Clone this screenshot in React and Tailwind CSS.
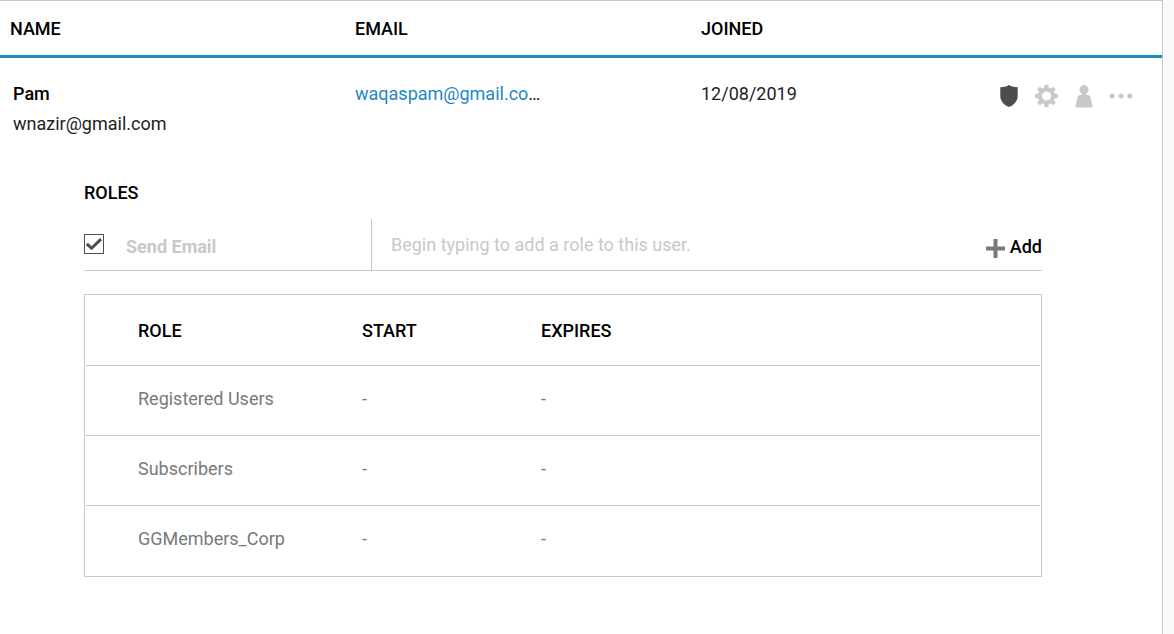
import React, { useState } from "react";

const roles = ["Registered Users", "Subscribers", "GGMembers_Corp"];

function ShieldIcon() {
  return (
    <svg width="18" height="22" viewBox="0 0 18 22" fill="#4b4e4f" aria-hidden="true">
      <path d="M9 0C11.4 1.4 14.5 2.2 17.700 2.300V11C17.700 16.200 13.500 20.500 9 22C4.500 20.500 .3 16.200 .3 11V2.300C3.500 2.200 6.600 1.400 9 0Z" />
    </svg>
  );
}

function GearIcon() {
  return (
    <svg width="25" height="24" viewBox="-12.5 -12 25 24" fill="#c8c8c8" aria-hidden="true">
      <path
        fillRule="evenodd"
        d="M0-8.500A8.500 8.500 0 1 1 0 8.500A8.500 8.500 0 1 1 0-8.500ZM0-4.600A4.600 4.600 0 1 0 0 4.600A4.600 4.600 0 1 0 0-4.600Z"
      />
      {[0, 45, 90, 135, 180, 225, 270, 315].map((angle) => (
        <path key={angle} transform={`rotate(${angle})`} d="M-2.400-7L-1.900-11.300H1.900L2.400-7Z" />
      ))}
    </svg>
  );
}

function UserIcon() {
  return (
    <svg width="18" height="23" viewBox="0 0 18 23" fill="#c8c8c8" aria-hidden="true">
      <circle cx="9" cy="4.600" r="4.500" />
      <path d="M6.700 8H11.300V10H13.300Q15 10 15.400 12L17.500 21Q17.800 22.600 16.500 22.600H1.500Q.2 22.600 .5 21L2.600 12Q3 10 4.700 10H6.700Z" />
    </svg>
  );
}

function MoreIcon() {
  return (
    <svg width="24" height="6" viewBox="0 0 24 6" fill="#c8c8c8" aria-hidden="true">
      <circle cx="3" cy="3" r="2.500" />
      <circle cx="12" cy="3" r="2.500" />
      <circle cx="21" cy="3" r="2.500" />
    </svg>
  );
}

function RoleForm() {
  const [sendEmail, setSendEmail] = useState(true);
  return (
    <form className="flex h-[52px] border-b border-[#c8c8c8]" onSubmit={(e) => e.preventDefault()}>
      <div className="flex w-[288px] shrink-0 items-center border-r border-[#c8c8c8] pb-0.5">
        <span className="relative flex size-5">
          <input
            id="send-email"
            type="checkbox"
            checked={sendEmail}
            onChange={(e) => setSendEmail(e.target.checked)}
            className="peer size-5 appearance-none border border-[#4b4e4f] bg-white"
          />
          <svg
            className="pointer-events-none absolute inset-0 hidden peer-checked:block"
            width="20"
            height="20"
            viewBox="0 0 20 20"
            fill="none"
            stroke="#4b4e4f"
            strokeWidth="3"
            aria-hidden="true"
          >
            <path d="M2.800 9.800L7.600 14.300L17 5.200" />
          </svg>
        </span>
        <label htmlFor="send-email" className="pt-1.5 pl-[22px] font-bold text-[#c8c8c8]">
          Send Email
        </label>
      </div>
      <input
        type="text"
        aria-label="Role"
        placeholder="Begin typing to add a role to this user."
        className="min-w-0 flex-1 pl-[19px] outline-none placeholder:text-[#c8c8c8] placeholder:opacity-100"
      />
      <button type="submit" className="flex items-center gap-[5px] pt-1 font-medium">
        <svg width="19" height="19" viewBox="0 0 19 19" fill="#777a7b" className="mt-1" aria-hidden="true">
          <path d="M7.500 0H11.500V7.500H19V11.500H11.500V19H7.500V11.500H0V7.500H7.500Z" />
        </svg>
        Add
      </button>
    </form>
  );
}

function RolesTable() {
  return (
    <div className="mt-[23px] border border-[#c8c8c8] px-px">
      <table className="w-full table-fixed border-separate border-spacing-0 text-left">
        <thead>
          <tr className="h-[71px] [&>th]:border-b [&>th]:border-[#c8c8c8] [&>th]:pt-0.5 [&>th]:font-medium">
            <th className="w-[276px] pl-[52px]">ROLE</th>
            <th className="w-[179px]">START</th>
            <th>EXPIRES</th>
          </tr>
        </thead>
        <tbody className="text-[#777a7b]">
          {roles.map((role) => (
            <tr
              key={role}
              className="h-[70px] [&>td]:border-b [&>td]:border-[#c8c8c8] [&>td]:pb-1 last:[&>td]:border-b-0"
            >
              <td className="pl-[52px]">{role}</td>
              <td>-</td>
              <td>-</td>
            </tr>
          ))}
        </tbody>
      </table>
    </div>
  );
}

export default function App() {
  return (
    <div className="min-h-screen bg-[#fafafa] pr-[11px] font-['Roboto',sans-serif] text-[18px] leading-[30px] text-black">
      <main className="min-h-screen border-t border-r border-[#c8c8c8] bg-white">
        <table className="w-full table-fixed border-separate border-spacing-0 text-left">
          <thead>
            <tr className="h-[57px] [&>th]:border-b-3 [&>th]:border-[#1e88c3] [&>th]:pt-0.5 [&>th]:font-medium">
              <th className="w-[355px] pl-[10px]">NAME</th>
              <th className="w-[346px]">EMAIL</th>
              <th>JOINED</th>
              <th className="w-[180px]" aria-label="Actions"></th>
            </tr>
          </thead>
          <tbody>
            <tr className="align-top [&>td]:pt-[21px]">
              <td className="pl-[13px]">
                <div className="font-medium">Pam</div>
                <div className="text-[#222222]">wnazir@gmail.com</div>
              </td>
              <td className="text-[#222222]">
                <a href="mailto:waqaspam@gmail.co" className="text-[#1e88c3]">
                  waqaspam@gmail.co
                </a>
                …
              </td>
              <td className="text-[#222222]">12/08/2019</td>
              <td>
                <div className="flex items-center justify-end gap-4 pt-[5px] pr-[29px]">
                  <button type="button" aria-label="Roles"><ShieldIcon /></button>
                  <button type="button" aria-label="Settings"><GearIcon /></button>
                  <button type="button" aria-label="Profile"><UserIcon /></button>
                  <button type="button" aria-label="More"><MoreIcon /></button>
                </div>
              </td>
            </tr>
            <tr>
              <td colSpan={4} className="pt-[39px] pr-[120px] pb-14 pl-[84px]">
                <h2 className="mb-[11px] font-medium">ROLES</h2>
                <RoleForm />
                <RolesTable />
              </td>
            </tr>
          </tbody>
        </table>
      </main>
    </div>
  );
}
